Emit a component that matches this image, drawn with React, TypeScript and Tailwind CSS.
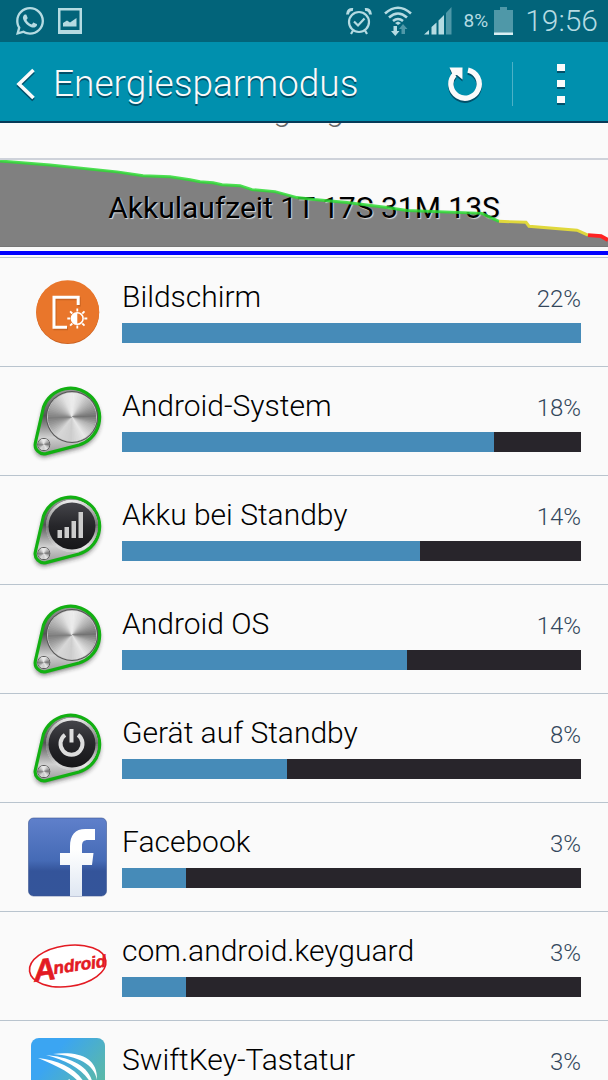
import { FaWhatsapp } from 'react-icons/fa';

const apps = [
  { name: 'Bildschirm', percent: 22, fill: 100, icon: <ScreenIcon /> },
  { name: 'Android-System', percent: 18, fill: 81, icon: <KnobIcon id="system" face="metal" /> },
  { name: 'Akku bei Standby', percent: 14, fill: 65, icon: <KnobIcon id="cell" face="signal" /> },
  { name: 'Android OS', percent: 14, fill: 62, icon: <KnobIcon id="os" face="metal" /> },
  { name: 'Gerät auf Standby', percent: 8, fill: 36, icon: <KnobIcon id="idle" face="power" /> },
  { name: 'Facebook', percent: 3, fill: 14, icon: <FacebookIcon /> },
  { name: 'com.android.keyguard', percent: 3, fill: 14, icon: <AndroidIcon /> },
  { name: 'SwiftKey-Tastatur', percent: 3, fill: 14, icon: <SwiftKeyIcon /> },
];

// [degrees clockwise from the top, grey level]
const shine = [
  [0, 238],
  [25, 215],
  [60, 160],
  [85, 115],
  [110, 180],
  [145, 232],
  [180, 205],
  [215, 215],
  [245, 160],
  [265, 125],
  [290, 165],
  [335, 225],
  [360, 238],
];

function greyAt(angle: number) {
  const i = shine.findIndex(([a]) => a > angle);
  const [a0, g0] = shine[i - 1];
  const [a1, g1] = shine[i];
  return Math.round(g0 + ((g1 - g0) * (angle - a0)) / (a1 - a0));
}

function Brushed({ cx, cy, r }: { cx: number; cy: number; r: number }) {
  const at = (deg: number) => {
    const rad = ((deg - 90) * Math.PI) / 180;
    return `${cx + r * Math.cos(rad)} ${cy + r * Math.sin(rad)}`;
  };
  // each wedge reaches under the following ones, so no seams show
  return (
    <g>
      {Array.from({ length: 72 }, (_, i) => {
        const g = greyAt(i * 5);
        const end = Math.min(i * 5 + 25, 361);
        return (
          <path
            key={i}
            d={`M${cx} ${cy}L${at(i * 5)}A${r} ${r} 0 0 1 ${at(end)}Z`}
            fill={`rgb(${g},${g},${g})`}
          />
        );
      })}
    </g>
  );
}

function KnobIcon({ id, face }: { id: string; face: 'metal' | 'signal' | 'power' }) {
  const outline = 'M15.5 26A29 29 0 1 1 51 64L18 72.6A9 9 0 0 1 7.3 62Z';
  return (
    <svg viewBox="0 0 80 80" className="size-20 overflow-visible">
      <defs>
        <linearGradient id={`${id}-plate`} x1="0" y1="0" x2="0" y2="1">
          <stop offset="0" stopColor="#9a9a9a" />
          <stop offset=".42" stopColor="#555" />
          <stop offset=".75" stopColor="#d0d0d0" />
          <stop offset="1" stopColor="#999" />
        </linearGradient>
        <linearGradient id={`${id}-dark`} x1="0" y1="0" x2="0" y2="1">
          <stop offset="0" stopColor="#45454a" />
          <stop offset=".5" stopColor="#26262a" />
          <stop offset="1" stopColor="#161618" />
        </linearGradient>
        <filter id={`${id}-shadow`} x="-30%" y="-30%" width="160%" height="160%">
          <feGaussianBlur stdDeviation="2.5" />
        </filter>
      </defs>
      <path d={outline} fill="#222" opacity=".65" transform="translate(0 3)" filter={`url(#${id}-shadow)`} />
      <path d={outline} fill={`url(#${id}-plate)`} stroke="#12b012" strokeWidth="3.2" strokeLinejoin="round" />
      <circle cx="15.8" cy="63.5" r="6.5" fill="#555" />
      <Brushed cx={15.8} cy={63.5} r={5.5} />
      {face === 'metal' && (
        <>
          <circle cx="44" cy="36" r="26" fill="#555" />
          <circle cx="44" cy="36" r="25" fill="#c4c4c4" />
          <Brushed cx={44} cy={36} r={24} />
        </>
      )}
      {face !== 'metal' && (
        <>
          <Brushed cx={44} cy={36} r={26} />
          <circle cx="44" cy="36" r="23.5" fill={`url(#${id}-dark)`} />
        </>
      )}
      {face === 'signal' && <path d="M29.5 40h4.5v8h-4.5zM36.5 37h4.5v11h-4.5zM43.5 31h4.5v17h-4.5zM50.5 22h4.5v26h-4.5z" fill="#ccc" />}
      {face === 'power' && (
        <g stroke="#ddd" strokeWidth="4" fill="none">
          <path d="M37 26.8A11 11 0 1 0 50 26.8" />
          <path d="M43.5 21V34.5" />
        </g>
      )}
    </svg>
  );
}

function ScreenIcon() {
  return (
    <svg viewBox="0 0 80 80" className="size-20">
      <circle cx="39.7" cy="40.6" r="31.5" fill="#c9601f" />
      <circle cx="39.7" cy="39.7" r="31.5" fill="#e9762b" />
      <path d="M50.2 33V25.2H26V55.3H39" fill="none" stroke="#a94f18" strokeWidth="3" opacity=".5" transform="translate(1 1.5)" />
      <path d="M50.2 33V25.2H26V55.3H39" fill="none" stroke="#fff" strokeWidth="3" />
      <g transform="translate(49.3 46.5)" stroke="#fff" fill="none">
        <circle r="5.8" strokeWidth="1.6" />
        <path d="M0 -5.8A5.8 5.8 0 0 0 0 5.8Z" fill="#fff" stroke="none" />
        <path
          d="M0 -7V-10M0 7V10M-7 0H-10M7 0H10M-5 -5L-7.2 -7.2M5 -5L7.2 -7.2M-5 5L-7.2 7.2M5 5L7.2 7.2"
          strokeWidth="1.8"
        />
      </g>
    </svg>
  );
}

function FacebookIcon() {
  return (
    <svg viewBox="0 0 80 80" className="size-20">
      <defs>
        <linearGradient id="fb" x1="0" y1="0" x2="0" y2="1">
          <stop offset="0" stopColor="#5f80cb" />
          <stop offset=".55" stopColor="#456ab5" />
          <stop offset=".68" stopColor="#34549a" />
          <stop offset="1" stopColor="#34559a" />
        </linearGradient>
        <linearGradient id="fb-f" x1="0" y1="0" x2="0" y2="1">
          <stop offset=".3" stopColor="#fff" />
          <stop offset="1" stopColor="#dfe7f2" />
        </linearGradient>
      </defs>
      <rect x=".5" y="1" width="78" height="78" rx="5" fill="url(#fb)" stroke="#3c5590" strokeWidth=".6" />
      <path
        d="M42 79V48H32V36H42V29.5C42 18 47 12 57.5 12H67V23H60C55.5 23 54 25 54 29V36H65.5L64 48H54V79Z"
        fill="url(#fb-f)"
      />
    </svg>
  );
}

function AndroidIcon() {
  return (
    <svg viewBox="0 0 80 80" className="size-20 overflow-visible">
      <g transform="rotate(-8 39.7 40)" fill="#e31b23">
        <ellipse cx="39.7" cy="40" rx="38.5" ry="20.5" fill="#fff" stroke="#e31b23" strokeWidth="1.6" />
        <text
          x="5"
          y="51"
          fontFamily="'Liberation Sans', sans-serif"
          fontWeight="700"
          fontStyle="italic"
          stroke="#e31b23"
          strokeWidth=".6"
        >
          <tspan fontSize="31">A</tspan>
          <tspan fontSize="17" dx="-2" dy="-5">
            ndroid
          </tspan>
        </text>
      </g>
    </svg>
  );
}

function SwiftKeyIcon() {
  return (
    <svg viewBox="0 0 80 80" className="size-20">
      <defs>
        <linearGradient id="swift" x1="0" y1="0" x2="1" y2=".8">
          <stop offset=".3" stopColor="#3ba5f2" />
          <stop offset=".75" stopColor="#55b5b5" />
          <stop offset="1" stopColor="#5ebb9c" />
        </linearGradient>
      </defs>
      <rect x="3" y="4" width="74" height="74" rx="8" fill="#000" opacity=".25" />
      <rect x="3" y="3" width="74" height="74" rx="8" fill="url(#swift)" />
      <g fill="#fff">
        <path d="M25 19C50 16 70 22 69 45C66 29 50 21 25 19Z" />
        <path d="M18 20C42 22 64 31 65 52C56 34 40 26 18 20Z" />
        <path d="M10 23C36 26 58 38 61 62C50 40 34 33 10 23Z" />
        <path d="M41 44L48 50L45 56L30 60Z" />
      </g>
    </svg>
  );
}

function StatusBar() {
  return (
    <div className="flex h-[42px] shrink-0 items-center justify-between bg-[#02647a] pr-[10px] pl-[14px] text-[#b5dbe2]">
      <div className="flex items-center gap-3">
        <FaWhatsapp size={32} />
        <svg viewBox="0 0 24 26" className="h-[26px] w-6" fill="currentColor">
          <path fillRule="evenodd" d="M0 0H24V26H0ZM2.5 2.5V22H21.5V2.5Z" />
          <path d="M5 18.500V15L9 12.500L12 14.500L18.500 10V18.500Z" />
        </svg>
      </div>
      <div className="flex items-center gap-3">
        <svg viewBox="0 0 26 28" className="h-7 w-[26px]" fill="none" stroke="currentColor" strokeWidth="2.2">
          <circle cx="13" cy="15" r="10" />
          <path d="M8 14.5L12 18.5L18.5 11.5" />
          <path d="M1.5 7.5C1.5 4 4 2 7 2.5M24.5 7.5C24.5 4 22 2 19 2.5" strokeWidth="3" />
          <path d="M7 23.5L5 27M19 23.5L21 27" />
        </svg>
        <svg viewBox="0 0 28 30" className="h-[30px] w-7" fill="none" stroke="currentColor" strokeWidth="2.6">
          <path d="M1 7.5Q14 -4 27 7.5M5 11.5Q14 3.5 23 11.5M9 15Q14 11 19 15" />
          <path d="M11 17L14 15.5L17 17L14 19Z" fill="currentColor" stroke="none" />
          <path d="M9.5 20H13V25H15.5L11.3 30L7 25H9.5Z" fill="currentColor" stroke="none" />
          <path d="M17.5 28V23H15L19 18L23.5 23H21V28Z" fill="#4f98a8" stroke="none" />
        </svg>
        <svg viewBox="0 0 28 28" className="size-7" fill="currentColor">
          <path d="M0 27.5L5 23V27.5ZM7.5 20L12.5 15.5V27.5H7.5ZM14.5 13.5L20 8V27.5H14.5Z" />
          <path d="M22 6L27.5 0V27.5H22Z" fill="#4f98a8" />
        </svg>
        <div className="flex items-center gap-1.5">
          <span className="text-[19px] leading-6">8%</span>
          <svg viewBox="0 0 19 28" className="h-7 w-[19px]" fill="#4f98a8">
            <path d="M6 0H13V3H19V28H0V3H6Z" />
            <path d="M0 25.5H19V28H0Z" fill="#d9eef2" />
          </svg>
        </div>
        <span className="text-[30px] leading-10 font-light">19:56</span>
      </div>
    </div>
  );
}

function ActionBar() {
  return (
    <header className="flex h-[81px] shrink-0 items-center border-b-2 border-[#073a58] bg-[#0090ae] pt-1 pl-4 text-[#fafafa]">
      <button type="button" aria-label="Zurück" className="drop-shadow-[0_2px_0_#00506a]">
        <svg viewBox="0 0 19 32" className="h-8 w-[19px]" fill="none" stroke="currentColor" strokeWidth="3.6">
          <path d="M17.5 2L3 16L17.5 30" />
        </svg>
      </button>
      <h1 className="ml-4.5 flex-1 text-[37px] leading-[48px] font-light text-shadow-[0_2px_0_#00506a]">Energiesparmodus</h1>
      <button type="button" aria-label="Aktualisieren" className="drop-shadow-[0_2px_0_#00506a]">
        <svg viewBox="0 0 36 36" className="size-9">
          <path d="M21 4.1A14.2 14.2 0 1 1 7.5 8.5" fill="none" stroke="currentColor" strokeWidth="5.3" />
          <path d="M2.5 1.5H15.5V13.5L10 9L6 9.5Z" fill="currentColor" />
        </svg>
      </button>
      <span className="ml-[29px] h-11 w-px bg-[#4db1c6]" />
      <button type="button" aria-label="Weitere Optionen" className="mr-[43px] ml-11 flex flex-col gap-[9px] drop-shadow-[0_2px_0_#00506a]">
        <span className="h-[7px] w-2 bg-current" />
        <span className="h-[7px] w-2 bg-current" />
        <span className="h-[7px] w-2 bg-current" />
      </button>
    </header>
  );
}

const green =
  '0,1 50,5 117,12 143,16 170,17 190,20 200,22 213,23 222,25 240,26 252,30 275,32 297,38 314,40 347,43 387,48 407,51 482,54 490,58 499,62';
const yellow = '499,62 526,63 529,67 577,71 588,76';
const red = '588,76 601,77 608,81';

function History() {
  return (
    <section className="shrink-0 border-t-2 border-[#ced2da]">
      <div className="relative flex h-[87px] items-center justify-center border-b border-[#777]">
        <svg viewBox="0 0 608 87" preserveAspectRatio="none" className="absolute inset-0 size-full">
          <polygon points={`${green} ${yellow} ${red} 608,87 0,87`} fill="#808080" />
        </svg>
        <p className="relative pt-2.5 text-[30px] leading-10 text-black text-shadow-[1px_1px_1px_#ddd]">Akkulaufzeit 1T 17S 31M 13S</p>
        <svg viewBox="0 0 608 87" preserveAspectRatio="none" className="absolute inset-0 size-full" fill="none" strokeWidth="3">
          <polyline points={green} stroke="#2fdb35" strokeOpacity=".85" />
          <polyline points={yellow} stroke="#e0d83c" />
          <polyline points={red} stroke="#f22" strokeWidth="4" />
        </svg>
      </div>
      <div className="mt-1 h-1 bg-[#0000ff]" />
      <div className="h-0.5" />
    </section>
  );
}

export default function App() {
  return (
    <div className="flex h-screen flex-col overflow-hidden bg-[#fafafa] font-['Roboto',sans-serif]">
      <StatusBar />
      <ActionBar />
      <main className="flex min-h-0 flex-1 flex-col overflow-hidden">
        <div className="flex h-[35px] shrink-0 items-end justify-center overflow-hidden pb-7 text-[32px] leading-10 font-light text-[#666]">
          Verfügungszeit
        </div>
        <History />
        <ul>
          {apps.map((app) => (
            <li key={app.name} className="flex h-[109px] items-center gap-3.5 border-t border-[#b9c4ce] pr-[27px] pl-7">
              {app.icon}
              <div className="flex-1 pb-[5px]">
                <div className="flex items-baseline justify-between">
                  <span className="text-[30px] leading-10 font-light text-black">{app.name}</span>
                  <span className="text-2xl leading-10 font-light text-[#33475c]">{app.percent}%</span>
                </div>
                <div
                  role="progressbar"
                  aria-label={app.name}
                  aria-valuenow={app.percent}
                  className="mt-1 h-5 bg-[#28252b]"
                >
                  <div className="h-full bg-[#468bb8]" style={{ width: `${app.fill}%` }} />
                </div>
              </div>
            </li>
          ))}
        </ul>
      </main>
    </div>
  );
}
